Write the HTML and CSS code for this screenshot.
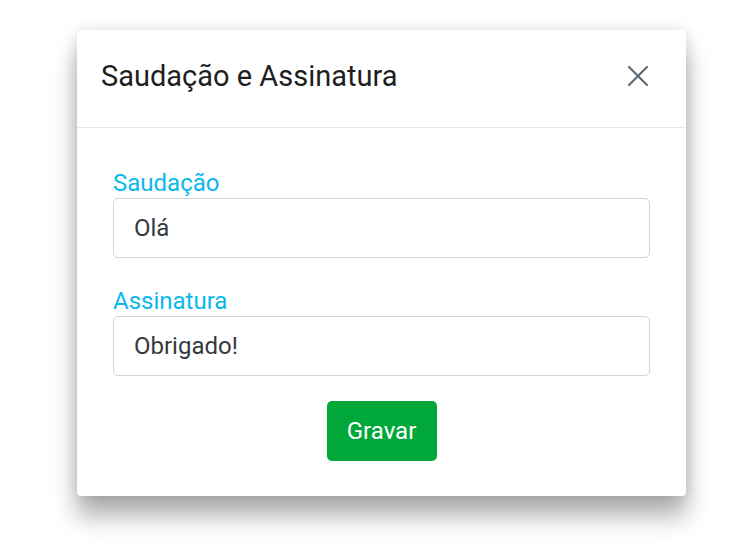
FILE: index.html
```html
<!DOCTYPE html>
<html lang="pt">
<head>
<meta charset="utf-8">
<title>Saudação e Assinatura</title>
<link rel="stylesheet" href="styles.css">
</head>
<body>
<div class="stage">
  <div class="modal">
    <div class="modal-header">
      <h1 class="modal-title">Saudação e Assinatura</h1>
      <button class="close" aria-label="Fechar">
        <svg width="22" height="22" viewBox="0 0 22 22"><path d="M2 2 L20 20 M20 2 L2 20" stroke="#5b6b77" stroke-width="2.2" stroke-linecap="round" fill="none"/></svg>
      </button>
    </div>
    <div class="modal-body">
      <div class="field">
        <label class="label">Saudação</label>
        <div class="input">Olá</div>
      </div>
      <div class="field">
        <label class="label">Assinatura</label>
        <div class="input">Obrigado!</div>
      </div>
      <div class="actions">
        <button class="btn">Gravar</button>
      </div>
    </div>
  </div>
</div>
</body>
</html>
```
FILE: styles.css
```css
html, body {
  margin: 0;
  padding: 0;
  background: #ffffff;
}
body {
  width: 750px;
  height: 552px;
  overflow: hidden;
  font-family: "Roboto", "Liberation Sans", sans-serif;
}
.stage {
  padding: 30px 0 0 77px;
}
.modal {
  width: 609px;
  height: 466px;
  background: #fff;
  border-radius: 4px;
  box-shadow: 0 20px 24px rgba(0,0,0,0.32), 0 0 14px rgba(0,0,0,0.12);
  display: flex;
  flex-direction: column;
}
.modal-header {
  height: 98px;
  box-sizing: border-box;
  border-bottom: 1px solid #e3e6ea;
  display: flex;
  align-items: center;
  justify-content: space-between;
  padding: 0 37px 6px 24px;
}
.modal-title {
  margin: 0;
  font-weight: normal;
  font-size: 29px;
  color: #1e1e1e;
}
.close {
  border: 0;
  background: none;
  padding: 0;
  width: 22px;
  height: 22px;
  display: flex;
}
.modal-body {
  padding: 40px 36px 0 36px;
  display: flex;
  flex-direction: column;
}
.field {
  display: flex;
  flex-direction: column;
}
.field + .field {
  margin-top: 28px;
}
.label {
  font-size: 24px;
  color: #0bb8ec;
  line-height: 30px;
}
.input {
  height: 60px;
  box-sizing: border-box;
  border: 1.5px solid #cdd4db;
  border-radius: 5px;
  padding: 0 20px;
  display: flex;
  align-items: center;
  font-size: 24px;
  color: #343a40;
}
.actions {
  display: flex;
  justify-content: center;
  margin-top: 25px;
}
.btn {
  width: 110px;
  height: 60px;
  border: 0;
  border-radius: 5px;
  background: #00a83a;
  color: #fff;
  font-family: inherit;
  font-size: 24px;
}
```
